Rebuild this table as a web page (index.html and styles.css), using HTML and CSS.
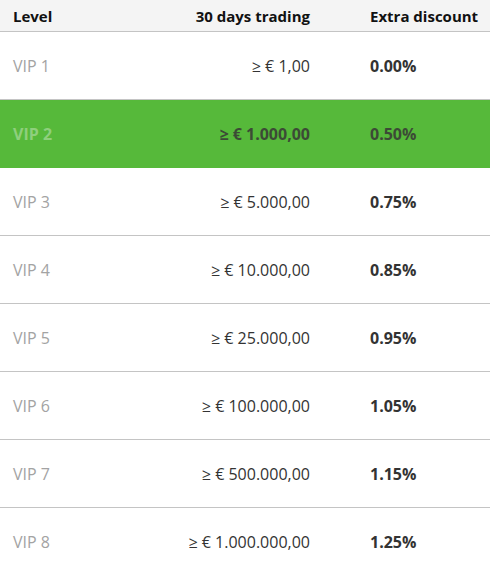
FILE: index.html
```html
<!DOCTYPE html>
<html lang="en">
<head>
    <meta charset="UTF-8">
    <meta name="viewport" content="width=device-width, initial-scale=1.0">
    <title>VIP levels</title>
    <link rel="stylesheet" href="styles.css">
</head>
<body>
    <table class="vip-table">
        <colgroup>
            <col class="col-level">
            <col class="col-volume">
            <col class="col-discount">
        </colgroup>
        <thead>
            <tr>
                <th class="level">Level</th>
                <th class="volume">30 days trading</th>
                <th class="discount">Extra discount</th>
            </tr>
        </thead>
        <tbody>
            <tr>
                <td class="level">VIP 1</td>
                <td class="volume">≥ € 1,00</td>
                <td class="discount">0.00%</td>
            </tr>
            <tr class="current">
                <td class="level">VIP 2</td>
                <td class="volume">≥ € 1.000,00</td>
                <td class="discount">0.50%</td>
            </tr>
            <tr>
                <td class="level">VIP 3</td>
                <td class="volume">≥ € 5.000,00</td>
                <td class="discount">0.75%</td>
            </tr>
            <tr>
                <td class="level">VIP 4</td>
                <td class="volume">≥ € 10.000,00</td>
                <td class="discount">0.85%</td>
            </tr>
            <tr>
                <td class="level">VIP 5</td>
                <td class="volume">≥ € 25.000,00</td>
                <td class="discount">0.95%</td>
            </tr>
            <tr>
                <td class="level">VIP 6</td>
                <td class="volume">≥ € 100.000,00</td>
                <td class="discount">1.05%</td>
            </tr>
            <tr>
                <td class="level">VIP 7</td>
                <td class="volume">≥ € 500.000,00</td>
                <td class="discount">1.15%</td>
            </tr>
            <tr>
                <td class="level">VIP 8</td>
                <td class="volume">≥ € 1.000.000,00</td>
                <td class="discount">1.25%</td>
            </tr>
        </tbody>
    </table>
</body>
</html>
```

FILE: styles.css
```css
body {
    margin: 0;
    background-color: #ffffff;
    font-family: 'Open Sans', sans-serif;
    font-size: 16px;
    color: #333333;
}

.vip-table {
    width: 490px;
    border-collapse: collapse;
    table-layout: fixed;
}

.col-level {
    width: 180px;
}

.col-volume {
    width: 160px;
}

.col-discount {
    width: 150px;
}

.vip-table th {
    height: 31px;
    padding: 0;
    background-color: #f4f4f4;
    color: #111111;
    font-size: 15px;
    font-weight: bold;
    border-bottom: 1px solid #c4c4c4;
    vertical-align: middle;
}

.vip-table td {
    height: 67px;
    padding: 0;
    border-bottom: 1px solid #c4c4c4;
    vertical-align: middle;
}

.vip-table .level {
    text-align: left;
    padding-left: 13px;
}

.vip-table .volume {
    text-align: right;
    padding-right: 30px;
}

.vip-table .discount {
    text-align: left;
    padding-left: 30px;
}

.vip-table td.level {
    color: #a3a3a3;
}

.vip-table td.discount {
    font-weight: bold;
}

.vip-table tr.current td {
    background-color: #56b93a;
    font-weight: bold;
    border-bottom-color: #56b93a;
}

.vip-table tr.current td.level {
    color: #8fcf7d;
}

.vip-table tr.current td.volume,
.vip-table tr.current td.discount {
    color: #3c4a36;
}
```
